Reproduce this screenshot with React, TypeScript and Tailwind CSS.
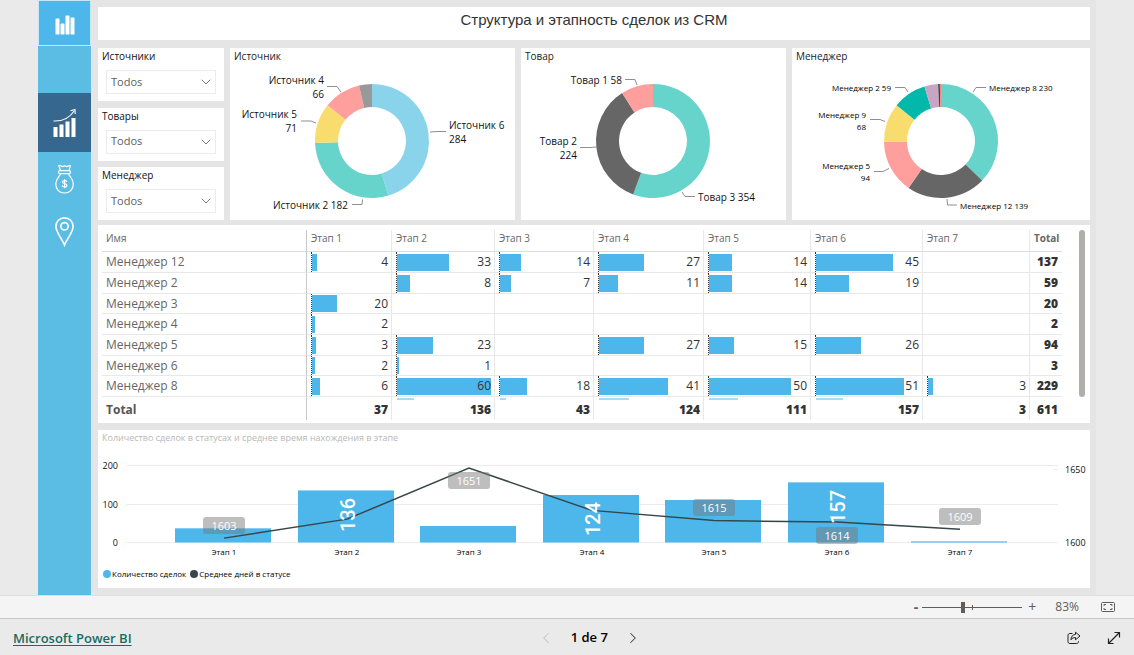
import { useState } from 'react';
import { ChevronDown, ChevronLeft, ChevronRight } from 'lucide-react';

interface Slice {
  value: number;
  color: string;
}

interface SliceLabel {
  lines: string[];
  x: number;
  y: number;
  anchor: 'start' | 'end';
  leader: string;
}

interface DonutCardProps {
  title: string;
  width: number;
  cx: number;
  slices: Slice[];
  labels: SliceLabel[];
  small?: boolean;
}

const sources: Slice[] = [
  { value: 284, color: '#8ad4eb' },
  { value: 182, color: '#67d4cc' },
  { value: 71, color: '#f8dd6e' },
  { value: 66, color: '#fe9f9d' },
  { value: 23, color: '#999999' },
];

const sourceLabels: SliceLabel[] = [
  { lines: ['Источник 4', '66'], x: 94, y: 18, anchor: 'end', leader: '97,20.5 107,20.5 111,26' },
  { lines: ['Источник 5', '71'], x: 67, y: 52, anchor: 'end', leader: '71,55 81,55 86,57' },
  { lines: ['Источник 6', '284'], x: 219, y: 63, anchor: 'start', leader: '200,66 208,65.5 216,65.5' },
  { lines: ['Источник 2 182'], x: 118, y: 143, anchor: 'end', leader: '122,138.5 132,138.5 132.5,133.5' },
];

const products: Slice[] = [
  { value: 354, color: '#67d4cc' },
  { value: 224, color: '#666666' },
  { value: 58, color: '#fe9f9d' },
];

const productLabels: SliceLabel[] = [
  { lines: ['Товар 1 58'], x: 101, y: 18, anchor: 'end', leader: '104,13.5 114,13.5 116,19' },
  { lines: ['Товар 2', '224'], x: 56, y: 79, anchor: 'end', leader: '59,81.5 69,81.5 75,81' },
  { lines: ['Товар 3 354'], x: 177, y: 135, anchor: 'start', leader: '161,126 164,130.5 174,130.5' },
];

const managers: Slice[] = [
  { value: 230, color: '#67d4cc' },
  { value: 139, color: '#666666' },
  { value: 94, color: '#fe9f9d' },
  { value: 68, color: '#f8dd6e' },
  { value: 59, color: '#01b8aa' },
  { value: 24, color: '#c8a5c4' },
  { value: 3, color: '#374649' },
  { value: 2, color: '#fd817e' },
];

const managerLabels: SliceLabel[] = [
  { lines: ['Менеджер 2 59'], x: 99, y: 25, anchor: 'end', leader: '103,21.5 113,21.5 116,26' },
  { lines: ['Менеджер 9', '68'], x: 74, y: 52, anchor: 'end', leader: '78,53.5 88,53.5 93,55.5' },
  { lines: ['Менеджер 5', '94'], x: 78, y: 103, anchor: 'end', leader: '82,105.5 91,105.5 97,102.5' },
  { lines: ['Менеджер 8 230'], x: 197, y: 25, anchor: 'start', leader: '181,26 184,21.5 194,21.5' },
  { lines: ['Менеджер 12 139'], x: 168, y: 143, anchor: 'start', leader: '155,133 155.5,139 165,139' },
];

const stages = ['Этап 1', 'Этап 2', 'Этап 3', 'Этап 4', 'Этап 5', 'Этап 6', 'Этап 7'];

const rows: { name: string; values: (number | null)[]; total: number }[] = [
  { name: 'Менеджер 12', values: [4, 33, 14, 27, 14, 45, null], total: 137 },
  { name: 'Менеджер 2', values: [null, 8, 7, 11, 14, 19, null], total: 59 },
  { name: 'Менеджер 3', values: [20, null, null, null, null, null, null], total: 20 },
  { name: 'Менеджер 4', values: [2, null, null, null, null, null, null], total: 2 },
  { name: 'Менеджер 5', values: [3, 23, null, 27, 15, 26, null], total: 94 },
  { name: 'Менеджер 6', values: [2, 1, null, null, null, null, null], total: 3 },
  { name: 'Менеджер 8', values: [6, 60, 18, 41, 50, 51, 3], total: 229 },
];

// top edge of the next row, cut off by the scroll area
const clippedRow = [null, 11, 4, 18, 18, 16, null];
const totals = [37, 136, 43, 124, 111, 157, 3];
const MAX_VALUE = 60;

const combo = [
  { count: 37, days: 1603, badgeY: 65 },
  { count: 136, days: 1616, labelY: 63 },
  { count: 43, days: 1651, badgeY: 20 },
  { count: 124, days: 1622, labelY: 67 },
  { count: 111, days: 1615, badgeY: 47 },
  { count: 157, days: 1614, badgeY: 75, labelY: 55 },
  { count: 3, days: 1609, badgeY: 56 },
];

function point(cx: number, cy: number, r: number, angle: number) {
  return `${cx + r * Math.sin(angle)} ${cy - r * Math.cos(angle)}`;
}

function slicePath(cx: number, cy: number, from: number, to: number) {
  const outer = 57;
  const inner = 34;
  const large = to - from > Math.PI ? 1 : 0;
  return [
    `M${point(cx, cy, outer, from)}`,
    `A${outer} ${outer} 0 ${large} 1 ${point(cx, cy, outer, to)}`,
    `L${point(cx, cy, inner, to)}`,
    `A${inner} ${inner} 0 ${large} 0 ${point(cx, cy, inner, from)}`,
    'Z',
  ].join(' ');
}

function DonutCard({ title, width, cx, slices, labels, small }: DonutCardProps) {
  const total = slices.reduce((sum, s) => sum + s.value, 0);
  let start = 0;

  return (
    <section className="bg-white">
      <h2 className="h-[18px] px-1 text-[10px] leading-4 text-[#222]">{title}</h2>
      <svg viewBox={`0 0 ${width} 154`} className="block w-full" role="img" aria-label={title}>
        {slices.map((slice, i) => {
          const from = start;
          start += (slice.value / total) * Math.PI * 2;
          return <path key={i} d={slicePath(cx, 75, from, start)} fill={slice.color} />;
        })}
        {labels.map((label) => (
          <g key={label.lines[0]}>
            <polyline points={label.leader} fill="none" stroke="#8f8f8f" strokeWidth="1" />
            {label.lines.map((line, i) => (
              <text
                key={line}
                x={label.x}
                y={label.y + i * (small ? 12 : 14)}
                textAnchor={label.anchor}
                className={small ? 'fill-black text-[8px]' : 'fill-[#111] text-[10px]'}
              >
                {line}
              </text>
            ))}
          </g>
        ))}
      </svg>
    </section>
  );
}

function Slicer({ id, title }: { id: string; title: string }) {
  return (
    <div className="h-[53px] bg-white">
      <label htmlFor={id} className="block h-[22px] px-1 text-[10px] leading-4 text-[#111]">
        {title}
      </label>
      <div className="relative mx-2">
        <select
          id={id}
          className="block h-6 w-full appearance-none rounded-none border border-[#ececec] bg-white px-1 text-[11px] text-[#605e5c]"
        >
          <option>Todos</option>
        </select>
        <ChevronDown
          className="pointer-events-none absolute right-0.5 top-1 h-4 w-4 text-[#666]"
          strokeWidth={1.3}
        />
      </div>
    </div>
  );
}

function Sidebar() {
  return (
    <nav className="flex w-[53px] shrink-0 flex-col bg-[#5bbde3]">
      <button
        aria-label="Отчёт"
        className="flex h-[46px] items-center justify-center border border-[#c6e8f8] bg-[#4db6ea] pt-1"
      >
        <svg width="20" height="20" viewBox="0 0 20 20" fill="#fff">
          <rect x="0.5" y="3.5" width="4" height="16" rx="0.6" />
          <rect x="5.5" y="8.5" width="4" height="11" rx="0.6" />
          <rect x="10.5" y="0.5" width="4" height="19" rx="0.6" />
          <rect x="15.5" y="2.5" width="4" height="17" rx="0.6" />
        </svg>
      </button>
      <button aria-label="Рост" className="mt-[47px] flex h-[59px] items-center justify-center bg-[#36688f]">
        <svg width="24" height="30" viewBox="0 0 24 30" fill="#fff">
          <rect x="0.5" y="19" width="4" height="10" />
          <rect x="6.5" y="16.5" width="4" height="12.5" />
          <rect x="12.5" y="13.5" width="4" height="15.5" />
          <rect x="18.5" y="10" width="4" height="19" />
          <path d="M0.5 13 C10 13.5 17 9.5 21.5 2.5" fill="none" stroke="#fff" strokeWidth="1.1" />
          <path d="M17.5 2.8 L22 1.5 L22.2 6" fill="none" stroke="#fff" strokeWidth="1.1" />
        </svg>
      </button>
      <button aria-label="Деньги" className="flex h-[53px] items-center justify-center">
        <svg width="20" height="30" viewBox="0 0 20 30" fill="none" stroke="#fff" strokeWidth="1.2">
          <path d="M5.5 6.5 L3.7 1.5 C6 0.8 6.5 3 8 2.5 C9.5 1.5 10 1.5 11.5 2.5 C13 3 13.5 0.8 15.5 1.5 L14 6.5 Z" />
          <rect x="3.5" y="6.7" width="12" height="3" rx="1.5" />
          <path d="M5.5 10 C4 13 0.8 15 0.8 20 C0.8 25.5 4.5 29 9.5 29 C14.5 29 18.3 25.5 18.3 20 C18.3 15 15 13 13.5 10" />
          <path d="M11.8 17.8 C11.3 16 7.5 16 7.5 18 C7.5 20 11.9 19.3 11.9 21.4 C11.9 23.4 7.7 23.4 7.2 21.4 M9.6 15.2 V24.2" />
        </svg>
      </button>
      <button aria-label="Карта" className="flex h-[53px] items-center justify-center">
        <svg width="20" height="30" viewBox="0 0 20 30" fill="none" stroke="#fff" strokeWidth="1.6">
          <path d="M9.5 28 C7.5 22.5 0.9 15.5 0.9 9.6 C0.9 4.4 4.6 0.9 9.5 0.9 C14.4 0.9 18.1 4.4 18.1 9.6 C18.1 15.5 11.5 22.5 9.5 28 Z" />
          <circle cx="9.5" cy="9.3" r="3.7" />
        </svg>
      </button>
    </nav>
  );
}

function DataBar({ value }: { value: number }) {
  return (
    <div
      className="col-start-1 row-start-1 h-[17px] bg-[#4db6ea]"
      style={{ width: `${(value / MAX_VALUE) * 100}%` }}
    />
  );
}

function StageTable() {
  return (
    <section className="flex h-[198px] bg-white pb-1 pl-1 pr-[5px] pt-[5px]">
      <div className="min-w-0 flex-1">
        <table className="w-full table-fixed border-separate border-spacing-0 text-xs text-[#333]">
          <colgroup>
            <col className="w-[205px]" />
            <col className="w-[85px]" />
            <col className="w-[103px]" />
            <col className="w-[99px]" />
            <col className="w-[110px]" />
            <col className="w-[107px]" />
            <col className="w-[112px]" />
            <col className="w-[107px]" />
            <col className="w-8" />
          </colgroup>
          <thead>
            <tr className="text-left text-[10px] leading-[14px] text-[#666]">
              <th className="border-b border-r border-b-[#dcdcdc] border-r-[#c8c8c8] px-1 pb-1.5 pt-px font-normal">Имя</th>
              {stages.map((stage) => (
                <th key={stage} className="border-b border-r border-b-[#dcdcdc] border-r-[#e8e8e8] px-1 pb-1.5 pt-px font-normal">
                  {stage}
                </th>
              ))}
              <th className="border-b border-b-[#dcdcdc] pb-1.5 pl-1 pt-px font-bold">Total</th>
            </tr>
          </thead>
          <tbody>
            {rows.map((row, i) => (
              <tr key={row.name} className={i % 3 === 2 ? 'h-5' : 'h-[21px]'}>
                <th className="border-b border-r border-b-[#e8e8e8] border-r-[#c8c8c8] px-1 py-0 text-left font-normal leading-[18px] text-[#666]">
                  {row.name}
                </th>
                {row.values.map((value, c) => (
                  <td key={c} className="border-b border-r border-[#e8e8e8] py-0 pl-1 pr-[3px]">
                    {value !== null && (
                      <div
                        className={
                          i % 3 === 2
                            ? 'grid h-[19px] items-center border-l border-dotted border-[#333]'
                            : 'grid h-5 items-center border-l border-dotted border-[#333]'
                        }
                      >
                        <DataBar value={value} />
                        <span className="relative col-start-1 row-start-1 text-right leading-[18px]">{value}</span>
                      </div>
                    )}
                  </td>
                ))}
                <td className="border-b border-[#e8e8e8] py-0 pr-1 text-right font-extrabold leading-[18px]">{row.total}</td>
              </tr>
            ))}
            <tr>
              <td className="border-r border-[#c8c8c8] p-0" />
              {clippedRow.map((value, c) => (
                <td key={c} className="border-r border-[#e8e8e8] py-0 pl-[5px] pr-[3px]">
                  <div className="pt-px">
                    <div
                      className="h-0.5 bg-[#a9dbf5]"
                      style={{ width: `${((value ?? 0) / MAX_VALUE) * 100}%` }}
                    />
                  </div>
                </td>
              ))}
              <td className="p-0" />
            </tr>
          </tbody>
          <tfoot>
            <tr className="font-extrabold leading-5">
              <th className="border-r border-[#c8c8c8] px-1 py-0 text-left font-bold text-[#555]">Total</th>
              {totals.map((total, c) => (
                <td key={c} className="border-r border-[#e8e8e8] py-0 pr-[3px] text-right">
                  {total}
                </td>
              ))}
              <td className="py-0 pr-1 text-right">611</td>
            </tr>
          </tfoot>
        </table>
      </div>
      <div className="ml-[17px] h-[167px] w-1.5 rounded-full bg-[#b0afae]" />
    </section>
  );
}

function ComboChart() {
  const centerX = (i: number) => Math.round(125 + i * 122.6);
  const countY = (count: number) => 90.5 - count * 0.383;
  const daysY = (days: number) => 90.5 - (days - 1600) * 1.46;

  return (
    <section className="bg-white pb-[7px]">
      <h2 className="h-[22px] px-1 text-[9px] leading-4 text-[#b8b8b8]">
        Количество сделок в статусах и среднее время нахождения в этапе
      </h2>
      <svg viewBox="0 0 992 115" className="block w-full text-[9px]" role="img" aria-label="Количество сделок в статусах">
        {[13.5, 52.5, 90.5].map((y) => (
          <line key={y} x1="28" x2="960" y1={y} y2={y} stroke="#ececec" />
        ))}
        <line x1="955" x2="960" y1="17.5" y2="17.5" stroke="#ececec" />
        <text x="20" y="17" textAnchor="end" className="fill-[#111]">200</text>
        <text x="20" y="56" textAnchor="end" className="fill-[#111]">100</text>
        <text x="20" y="94" textAnchor="end" className="fill-[#111]">0</text>
        <text x="967" y="21" className="fill-[#111]">1650</text>
        <text x="967" y="94" className="fill-[#111]">1600</text>

        {combo.map((item, i) => (
          <g key={stages[i]}>
            <rect
              x={centerX(i) - 48}
              y={countY(item.count)}
              width="96"
              height={item.count * 0.383}
              fill="#4db6ea"
            />
            <text x={centerX(i) + 1} y="103" textAnchor="middle" className="fill-black text-[8px]">
              {stages[i]}
            </text>
          </g>
        ))}

        <polyline
          points={combo.map((item, i) => `${centerX(i) + 1},${daysY(item.days)}`).join(' ')}
          fill="none"
          stroke="#374649"
          strokeWidth="1.5"
        />

        {combo.map((item, i) => (
          <g key={stages[i]}>
            {item.labelY && (
              <text
                transform={`translate(${centerX(i) + 9} ${item.labelY}) rotate(-90)`}
                textAnchor="middle"
                className="fill-white font-['Roboto',sans-serif] text-[20px] font-medium"
              >
                {item.count}
              </text>
            )}
            {item.badgeY && (
              <>
                <rect x={centerX(i) - 20} y={item.badgeY} width="42" height="17" rx="3" fill="#777" fillOpacity="0.48" />
                <text x={centerX(i) + 1} y={item.badgeY + 13} textAnchor="middle" className="fill-white text-[11px]">
                  {item.days}
                </text>
              </>
            )}
          </g>
        ))}
      </svg>
      <ul className="flex items-center gap-1 px-[5px] text-[8px] leading-[14px] text-black">
        <li className="flex items-center gap-px">
          <span className="h-2 w-2 rounded-full bg-[#4db6ea]" />
          Количество сделок
        </li>
        <li className="flex items-center gap-px">
          <span className="h-2 w-2 rounded-full bg-[#374649]" />
          Среднее дней в статусе
        </li>
      </ul>
    </section>
  );
}

function ZoomBar() {
  const [zoom, setZoom] = useState(40);

  return (
    <div className="flex h-6 items-center justify-end border-b border-t border-b-[#c8c8c8] border-t-[#dedede] bg-[#f4f4f4] pr-[19px] text-[#605e5c]">
      <button aria-label="Уменьшить" className="mr-1 text-sm font-bold leading-5">-</button>
      <div className="relative flex w-[100px] items-center">
        <input
          type="range"
          aria-label="Масштаб"
          min={0}
          max={100}
          value={zoom}
          onChange={(e) => setZoom(Number(e.target.value))}
          className="h-3 w-full appearance-none bg-transparent [&::-webkit-slider-runnable-track]:h-px [&::-webkit-slider-runnable-track]:bg-[#605e5c] [&::-webkit-slider-thumb]:-mt-[5px] [&::-webkit-slider-thumb]:h-[11px] [&::-webkit-slider-thumb]:w-1 [&::-webkit-slider-thumb]:appearance-none [&::-webkit-slider-thumb]:bg-[#605e5c]"
        />
        <span className="pointer-events-none absolute left-1/2 top-1 h-[5px] w-px bg-[#605e5c]" />
      </div>
      <button aria-label="Увеличить" className="ml-1.5 text-sm leading-5">+</button>
      <span className="ml-[19px] text-xs">83%</span>
      <button aria-label="По размеру страницы" className="ml-[22px]">
        <svg width="14" height="10" viewBox="0 0 14 10" fill="none" stroke="#605e5c">
          <rect x="0.5" y="0.5" width="13" height="9" rx="1" />
          <path d="M5 2.5 H3 V4 M3 6 V7.5 H5 M9 2.5 H11 V4 M11 6 V7.5 H9" />
        </svg>
      </button>
    </div>
  );
}

function Footer() {
  return (
    <footer className="flex h-9 grow items-center justify-between bg-[#eaeaea] px-[13px] pt-0.5">
      <a
        href="#"
        className="text-[13px] font-semibold leading-5 text-[#1a6b60] underline underline-offset-2"
      >
        Microsoft Power BI
      </a>
      <div className="mr-5 flex items-center gap-4 text-[13px] font-semibold text-black">
        <button aria-label="Назад" className="text-[#c4c4c4]">
          <ChevronLeft className="h-[18px] w-[18px]" strokeWidth={1.4} />
        </button>
        <span>1 de 7</span>
        <button aria-label="Вперёд" className="text-[#444]">
          <ChevronRight className="h-[18px] w-[18px]" strokeWidth={1.4} />
        </button>
      </div>
      <div className="flex items-center gap-[26px]">
        <button aria-label="Поделиться">
          <svg width="14" height="14" viewBox="0 0 14 14" fill="none" stroke="#222" strokeLinejoin="round">
            <path d="M5.5 2.5 H3 C1.7 2.5 1 3.2 1 4.5 V10.5 C1 11.8 1.7 12.5 3 12.5 H9.5 C10.8 12.5 11.5 11.8 11.5 10.5 V10" />
            <path d="M8.5 1.2 L13 5 L8.5 8.8 V6.6 C6.5 6.5 5 7.2 4 8.8 C4 5.8 5.5 3.6 8.5 3.4 Z" />
          </svg>
        </button>
        <button aria-label="Полный экран">
          <svg width="14" height="14" viewBox="0 0 14 14" fill="none" stroke="#222" strokeWidth="1.2">
            <path d="M1.5 12.5 L12.5 1.5 M7.5 1.5 H12.5 V6.5 M1.5 7.5 V12.5 H6.5" />
          </svg>
        </button>
      </div>
    </footer>
  );
}

export default function App() {
  return (
    <div className="flex min-h-screen flex-col bg-[#eaeaea] font-['Open_Sans','Noto_Sans',sans-serif]">
      <main className="mx-[38px] flex bg-[#e5e5e5]">
        <Sidebar />
        <div className="min-w-0 flex-1 pb-[7px] pl-[7px] pr-1.5 pt-[7px]">
          <header className="h-[33px] bg-white text-center">
            <h1 className="font-['Liberation_Sans',Arial,sans-serif] text-[15px] leading-[26px] text-[#333]">
              Структура и этапность сделок из CRM
            </h1>
          </header>
          <div className="mt-2 grid grid-cols-[126fr_285fr_265fr_298fr] gap-1.5">
            <div className="flex flex-col justify-between">
              <Slicer id="source" title="Источники" />
              <Slicer id="product" title="Товары" />
              <Slicer id="manager" title="Менеджер" />
            </div>
            <DonutCard title="Источник" width={285} cx={142} slices={sources} labels={sourceLabels} />
            <DonutCard title="Товар" width={265} cx={132} slices={products} labels={productLabels} />
            <DonutCard title="Менеджер" width={298} cx={149} slices={managers} labels={managerLabels} small />
          </div>
          <div className="mt-[5px]">
            <StageTable />
          </div>
          <div className="mt-[7px]">
            <ComboChart />
          </div>
        </div>
      </main>
      <ZoomBar />
      <Footer />
    </div>
  );
}
